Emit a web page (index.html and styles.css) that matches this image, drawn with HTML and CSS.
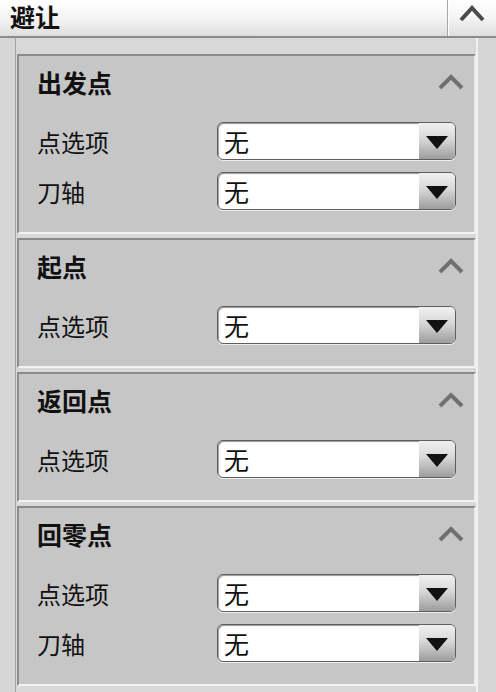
FILE: index.html
```html
<!DOCTYPE html>
<html lang="zh-CN">
<head>
    <meta charset="UTF-8">
    <title>避让</title>
    <link rel="stylesheet" href="styles.css">
</head>
<body>
    <div class="header">
        <span class="header-title">避让</span>
        <div class="header-toggle">
            <svg width="26" height="18" viewBox="0 0 26 18"><path d="M2 16 L13 4 L24 16" fill="none" stroke="#4a4a4a" stroke-width="4"/></svg>
        </div>
    </div>

    <div class="panel">
        <div class="group">
            <div class="group-head">
                <span>出发点</span>
                <svg class="caret" width="26" height="16" viewBox="0 0 26 16"><path d="M2 14 L13 3 L24 14" fill="none" stroke="#707070" stroke-width="4"/></svg>
            </div>
            <div class="rows">
                <div class="row">
                    <label>点选项</label>
                    <div class="combo"><span class="value">无</span><span class="arrow"></span></div>
                </div>
                <div class="row">
                    <label>刀轴</label>
                    <div class="combo"><span class="value">无</span><span class="arrow"></span></div>
                </div>
            </div>
        </div>

        <div class="group">
            <div class="group-head">
                <span>起点</span>
                <svg class="caret" width="26" height="16" viewBox="0 0 26 16"><path d="M2 14 L13 3 L24 14" fill="none" stroke="#707070" stroke-width="4"/></svg>
            </div>
            <div class="rows">
                <div class="row">
                    <label>点选项</label>
                    <div class="combo"><span class="value">无</span><span class="arrow"></span></div>
                </div>
            </div>
        </div>

        <div class="group">
            <div class="group-head">
                <span>返回点</span>
                <svg class="caret" width="26" height="16" viewBox="0 0 26 16"><path d="M2 14 L13 3 L24 14" fill="none" stroke="#707070" stroke-width="4"/></svg>
            </div>
            <div class="rows">
                <div class="row">
                    <label>点选项</label>
                    <div class="combo"><span class="value">无</span><span class="arrow"></span></div>
                </div>
            </div>
        </div>

        <div class="group">
            <div class="group-head">
                <span>回零点</span>
                <svg class="caret" width="26" height="16" viewBox="0 0 26 16"><path d="M2 14 L13 3 L24 14" fill="none" stroke="#707070" stroke-width="4"/></svg>
            </div>
            <div class="rows">
                <div class="row">
                    <label>点选项</label>
                    <div class="combo"><span class="value">无</span><span class="arrow"></span></div>
                </div>
                <div class="row">
                    <label>刀轴</label>
                    <div class="combo"><span class="value">无</span><span class="arrow"></span></div>
                </div>
            </div>
        </div>
    </div>
</body>
</html>
```

FILE: styles.css
```css
body {
    margin: 0;
    width: 496px;
    height: 692px;
    overflow: hidden;
    background: #d6d6d6;
    font-family: "Noto Sans CJK SC", "Noto Sans", sans-serif;
    color: #111;
}
.header {
    display: flex;
    height: 36px;
    background: linear-gradient(#ffffff, #f4f4f4 50%, #dedede);
    border-bottom: 2px solid #8c8c8c;
}
.header-title {
    flex: 1;
    font-size: 25px;
    font-weight: bold;
    line-height: 28px;
    padding-top: 2px;
    margin-left: 10px;
}
.header-toggle {
    width: 48px;
    border-left: 1px solid #a8a8a8;
    box-shadow: inset 1px 0 0 #ffffff;
    display: flex;
    justify-content: center;
    padding-top: 4px;
}
.header-toggle svg {
    display: block;
}
.panel {
    margin-left: 15px;
    margin-right: 18px;
    padding-top: 16px;
    padding-left: 1px;
    border-left: 1px solid #a4a4a4;
    border-right: 2px solid #f0f0f0;
    height: 640px;
    background: #d8d8d8;
    display: flex;
    flex-direction: column;
    gap: 4px;
}
.group {
    background: #c6c6c6;
    border-top: 2px solid #8a8a8a;
    border-left: 2px solid #8e8e8e;
    border-bottom: 2px solid #f2f2f2;
    border-right: 2px solid #ececec;
    padding: 0 18px 22px 18px;
}
.group-head {
    height: 52px;
    padding-bottom: 2px;
    display: flex;
    align-items: center;
    justify-content: space-between;
    font-size: 25px;
    font-weight: bold;
}
.caret {
    display: block;
    margin-right: -8px;
}
.rows {
    margin-top: 12px;
    display: flex;
    flex-direction: column;
    gap: 12px;
}
.row {
    display: flex;
    align-items: center;
    height: 38px;
}
.row label {
    width: 180px;
    font-size: 24px;
}
.combo {
    flex: 1;
    height: 36px;
    display: flex;
    border: 1px solid #5e5e5e;
    border-radius: 6px;
    background: #ffffff;
    box-shadow: inset 1px 1px 1px #999, 0 1px 0 #eeeeee;
    overflow: hidden;
}
.value {
    flex: 1;
    padding-left: 6px;
    font-size: 25px;
    line-height: 36px;
}
.arrow {
    width: 36px;
    background: linear-gradient(#f0f0f0, #d8d8d8 45%, #9c9c9c);
    display: flex;
    align-items: center;
    justify-content: center;
}
.arrow::after {
    content: "";
    width: 0;
    height: 0;
    border-left: 11px solid transparent;
    border-right: 11px solid transparent;
    border-top: 13px solid #111;
    margin-top: 2px;
}
```
